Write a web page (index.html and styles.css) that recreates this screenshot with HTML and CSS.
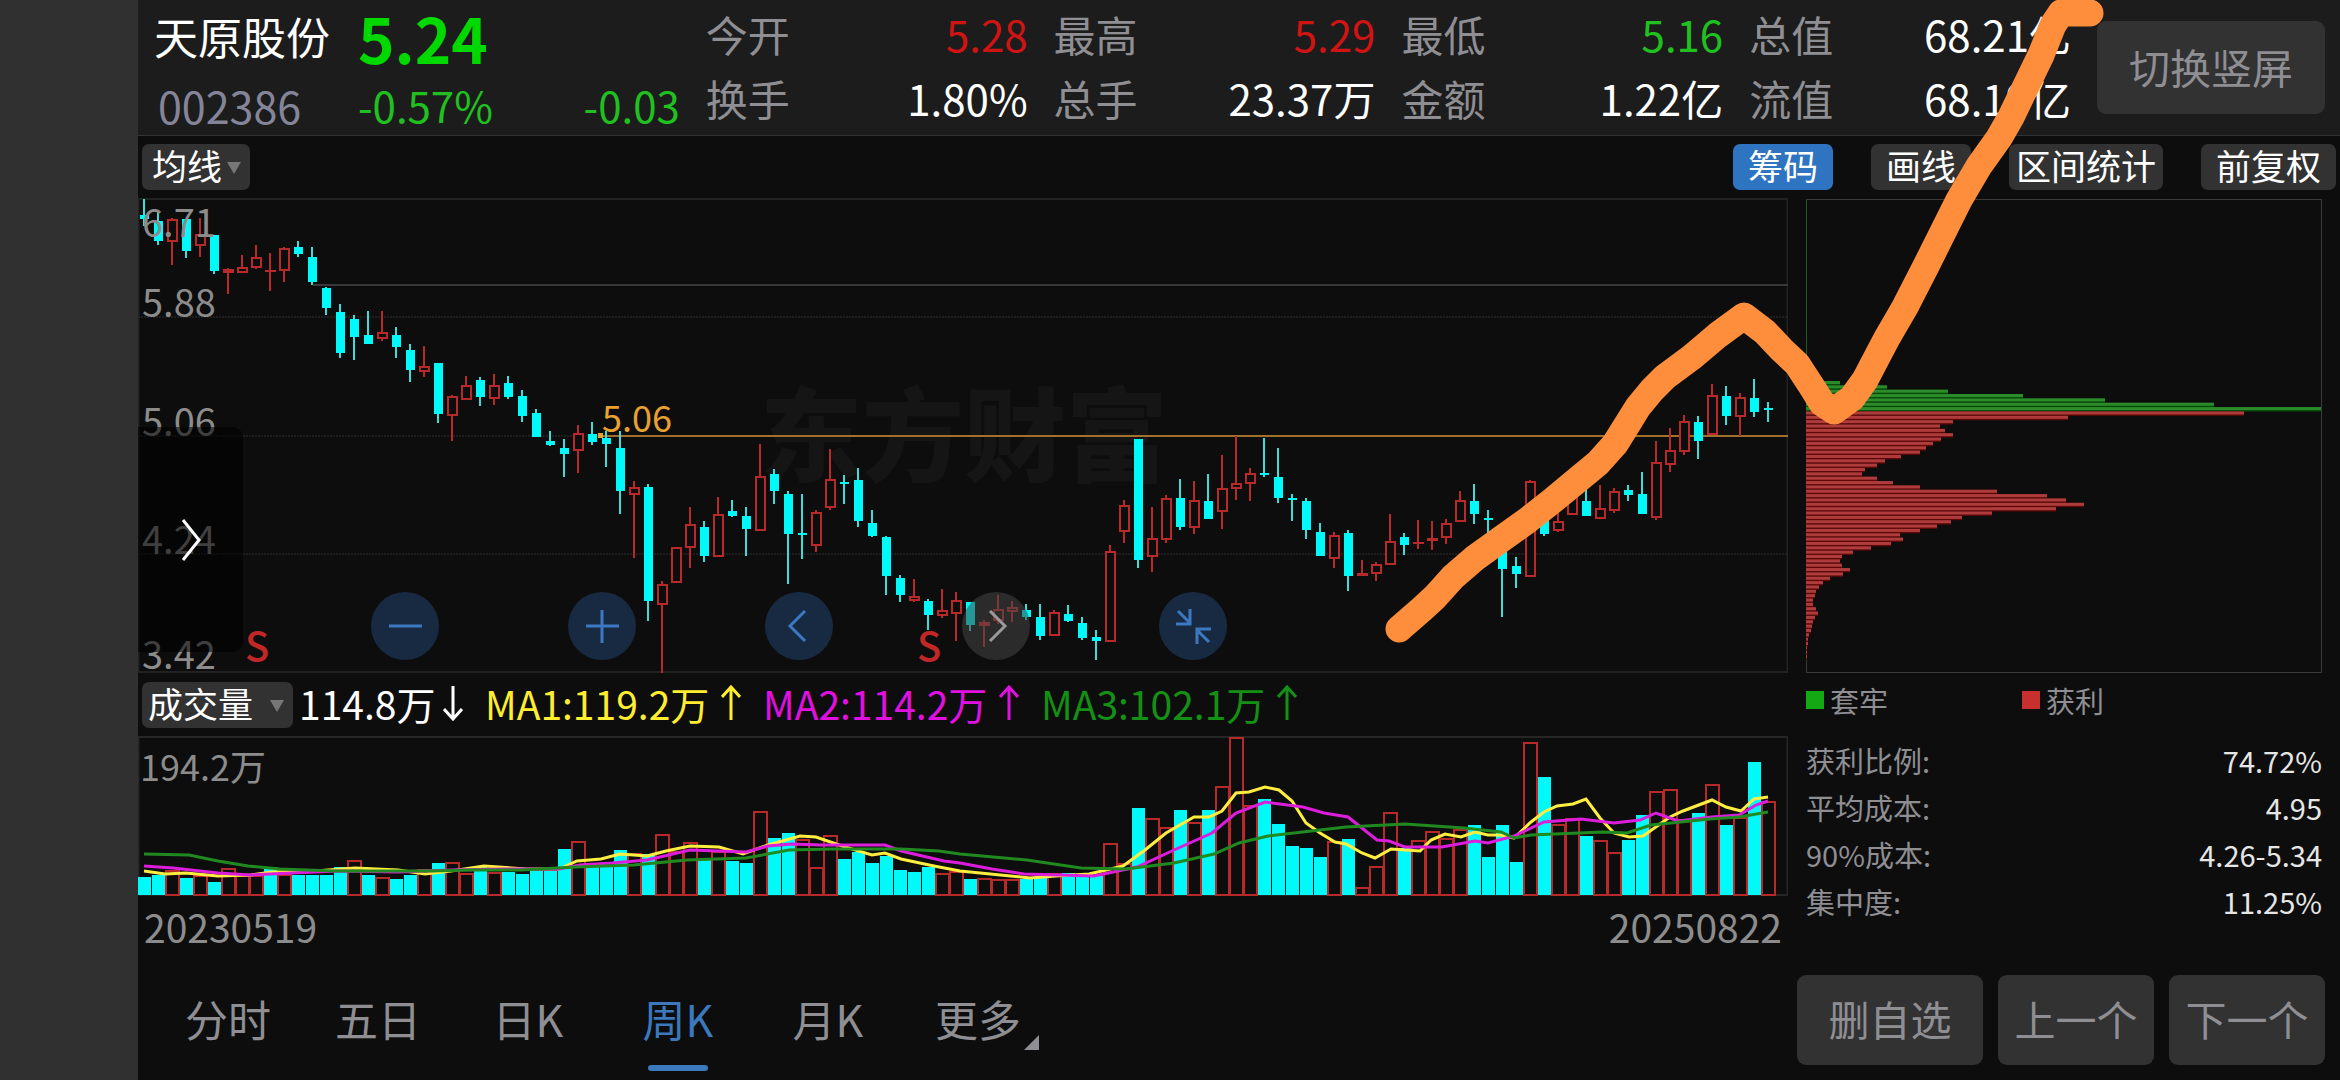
FILE: index.html
```html
<!DOCTYPE html>
<html lang="zh-CN">
<head>
<meta charset="utf-8">
<meta name="viewport" content="width=device-width, initial-scale=1">
<title>天原股份 002386 周K</title>
<link rel="stylesheet" href="styles.css">
</head>
<body>
<div class="app">
  <main class="screen">
    <header class="quote">
      <div class="pair">
        <h1 class="name">天原股份</h1>
        <span class="code">002386</span>
      </div>
      <div class="pair">
        <strong class="price">5.24</strong>
        <div class="change"><span>-0.57%</span><span>-0.03</span></div>
      </div>
      <dl class="stats">
        <div><dt>今开</dt><dd class="up">5.28</dd></div>
        <div><dt>换手</dt><dd>1.80%</dd></div>
      </dl>
      <dl class="stats">
        <div><dt>最高</dt><dd class="up">5.29</dd></div>
        <div><dt>总手</dt><dd>23.37万</dd></div>
      </dl>
      <dl class="stats">
        <div><dt>最低</dt><dd class="down">5.16</dd></div>
        <div><dt>金额</dt><dd>1.22亿</dd></div>
      </dl>
      <dl class="stats">
        <div><dt>总值</dt><dd>68.21亿</dd></div>
        <div><dt>流值</dt><dd>68.19亿</dd></div>
      </dl>
      <button class="block-btn rotate" type="button">切换竖屏</button>
    </header>

    <div class="toolbar">
      <span class="picker">
        <select class="picker-main" aria-label="主图指标"><option>均线</option></select>
      </span>
      <div class="tools">
        <button class="tool active" type="button">筹码</button>
        <button class="tool" type="button">画线</button>
        <button class="tool wide" type="button">区间统计</button>
        <button class="tool" type="button">前复权</button>
      </div>
    </div>

    <div class="board">
      <section class="charts">
        <div class="plot price-plot">
          <span class="watermark">东方财富</span>
          <svg id="candles" viewBox="0 0 1650 475" preserveAspectRatio="none" aria-label="周K线"></svg>
          <span class="axis a1">6.71</span>
          <span class="axis a2">5.88</span>
          <span class="axis a3">5.06</span>
          <span class="axis a4">4.24</span>
          <span class="axis a5">3.42</span>
          <span class="mark-price">5.06</span>
          <span class="sell s1">S</span>
          <span class="sell s2">S</span>
          <button class="drawer" type="button" aria-label="展开">
            <svg width="24" height="48" viewBox="0 0 24 48"><path d="M4 4 L20 24 L4 44" fill="none" stroke="#fff" stroke-width="3"/></svg>
          </button>
          <div class="controls">
            <button type="button" aria-label="缩小"><svg viewBox="0 0 68 68"><path d="M18 34H51"/></svg></button>
            <button type="button" aria-label="放大"><svg viewBox="0 0 68 68"><path d="M18 34H51M34 18V51"/></svg></button>
            <button type="button" aria-label="左移"><svg viewBox="0 0 68 68"><path d="M40 19 L25 34 L40 49"/></svg></button>
            <button type="button" class="off" aria-label="右移"><svg viewBox="0 0 68 68"><path d="M28 19 L43 34 L28 49"/></svg></button>
            <button type="button" aria-label="退出全屏"><svg viewBox="0 0 68 68"><path d="M19 19 L31 31M31 17V32H17M50 50 L38 38M38 52V37H52"/></svg></button>
          </div>
        </div>

        <div class="vol-head">
          <span class="picker">
            <select class="picker-vol" aria-label="副图指标"><option>成交量</option></select>
          </span>
          <span class="ma now">114.8万<svg viewBox="0 0 20 36"><path d="M10 1V34M1 24 L10 34 L19 24"/></svg></span>
          <span class="ma m1">MA1:119.2万<svg viewBox="0 0 20 36"><path d="M10 35V2M1 12 L10 2 L19 12"/></svg></span>
          <span class="ma m2">MA2:114.2万<svg viewBox="0 0 20 36"><path d="M10 35V2M1 12 L10 2 L19 12"/></svg></span>
          <span class="ma m3">MA3:102.1万<svg viewBox="0 0 20 36"><path d="M10 35V2M1 12 L10 2 L19 12"/></svg></span>
        </div>

        <div class="plot vol-plot">
          <svg id="volume" viewBox="0 0 1650 160" preserveAspectRatio="none" aria-label="成交量"></svg>
          <span class="axis vmax">194.2万</span>
        </div>
        <div class="dates"><time datetime="2023-05-19">20230519</time><time datetime="2025-08-22">20250822</time></div>
      </section>

      <section class="chips">
        <svg id="chips" viewBox="0 0 516 475" preserveAspectRatio="none" aria-label="筹码分布"></svg>
        <div class="legend"><span class="trapped">套牢</span><span class="profit">获利</span></div>
        <dl class="facts">
          <div><dt>获利比例:</dt><dd>74.72%</dd></div>
          <div><dt>平均成本:</dt><dd>4.95</dd></div>
          <div><dt>90%成本:</dt><dd>4.26-5.34</dd></div>
          <div><dt>集中度:</dt><dd>11.25%</dd></div>
        </dl>
      </section>
    </div>

    <footer class="bottom">
      <nav class="tabs">
        <a href="#fs">分时</a>
        <a href="#d5">五日</a>
        <a href="#day">日K</a>
        <a href="#week" class="current" aria-current="page">周K</a>
        <a href="#month">月K</a>
        <a href="#more" class="more">更多</a>
      </nav>
      <div class="actions">
        <button class="block-btn remove" type="button">删自选</button>
        <button class="block-btn" type="button">上一个</button>
        <button class="block-btn" type="button">下一个</button>
      </div>
    </footer>
  </main>
  <svg class="sketch" viewBox="0 0 2340 1080" preserveAspectRatio="none" aria-hidden="true">
    <polyline points="1399,629 1422,609 1435,597 1453,577 1475,558 1500,540 1528,520 1552,501 1575,482 1598,463 1615,444 1625,428 1638,407 1652,390 1665,377 1692,357 1718,335 1744,316 1765,332 1782,350 1797,364 1812,387 1822,403 1834,411 1852,398 1865,380 1877,357 1887,338 1905,307 1926,266 1943,232 1959,200 1979,166 1999,138 2011,117 2026,86 2041,55 2053,25 2061,13 2090,13"/>
  </svg>
</div>
<script src="charts.js"></script>
</body>
</html>
```
FILE: styles.css
```css
* { box-sizing: border-box; }

body {
  margin: 0;
  background: #0d0d0d;
  color: #fff;
  font-family: "Noto Sans CJK SC", "Noto Sans", sans-serif;
}

h1, dl, dd { margin: 0; font-weight: 400; }
button, select { font-family: inherit; border: 0; padding: 0; margin: 0; }
svg { display: block; }

.app {
  position: relative;
  display: flex;
  min-height: 100vh;
  padding-left: 138px;
  background: linear-gradient(to right, #303030 138px, #0d0d0d 138px);
}
.screen { flex: 1; min-width: 0; display: flex; flex-direction: column; }

/* quote header */
.quote {
  display: grid;
  grid-template-columns: 178px repeat(5, minmax(0, 1fr)) 228px;
  column-gap: 26px;
  height: 136px;
  padding: 2px 15px 0 16px;
  background: #1c1c1c;
  border-bottom: 1px solid #333;
  font-size: 42px;
}
.pair, .stats { display: flex; flex-direction: column; white-space: nowrap; }
.name { font-size: 44px; line-height: 68px; }
.code { line-height: 70px; padding-left: 4px; color: #85859a; font-size: 43px; }
.price { font-size: 62px; line-height: 70px; font-weight: 700; color: #00d800; }
.change { display: flex; justify-content: space-between; line-height: 66px; color: #20c020; }
.stats > div { display: flex; justify-content: space-between; line-height: 64px; }
.stats dt { color: #8e8e93; }
.up { color: #d01414; }
.down { color: #20c020; }

.block-btn {
  width: 156px;
  height: 90px;
  padding-bottom: 4px;
  border-radius: 9px;
  background: #323232;
  color: #8e8e93;
  font-size: 41px;
}
.block-btn.remove { width: 186px; }
.block-btn.rotate { width: 100%; height: 93px; margin-top: 19px; }

/* indicator toolbar */
.toolbar {
  display: flex;
  justify-content: space-between;
  align-items: center;
  height: 62px;
  padding: 0 4px;
}
.tools { display: flex; gap: 38px; }
.tool {
  height: 46px;
  padding: 0 15px 4px;
  border-radius: 7px;
  background: #323232;
  color: #fff;
  font-size: 35px;
  line-height: 42px;
}
.tool.wide { padding: 0 7px 4px; }
.tool.active { background: #2f74c0; }
.picker { position: relative; display: block; }
.picker::after {
  content: "";
  position: absolute;
  right: 9px;
  top: 18px;
  border: 7px solid transparent;
  border-top: 12px solid #777;
  border-bottom: 0;
}
.picker select {
  display: block;
  appearance: none;
  height: 46px;
  padding-bottom: 4px;
  border-radius: 7px;
  background: #323232;
  color: #fff;
  font-size: 35px;
  line-height: 42px;
}
.picker-main { width: 108px; padding-left: 10px; }
.picker-vol { width: 151px; padding-left: 6px; }

/* chart area */
.board {
  display: grid;
  grid-template-columns: minmax(0, 1fr) 516px;
  column-gap: 18px;
  padding-right: 18px;
}
.plot { position: relative; }
.plot > svg { position: relative; width: 100%; }
.price-plot > svg, .chips > svg { height: 475px; width: 100%; }
.vol-plot > svg { height: 160px; }

.axis { position: absolute; left: 4px; font-size: 38px; line-height: 38px; color: #8c8c8c; }
.a1 { top: 4px; }
.a2 { top: 84px; }
.a3 { top: 203px; }
.a4 { top: 321px; }
.a5 { top: 436px; }
.vmax { top: 10px; left: 2px; font-size: 36px; }
.mark-price { position: absolute; left: 464px; top: 200px; font-size: 36px; line-height: 36px; color: #e8a030; }
.watermark {
  position: absolute;
  left: 622px;
  top: 172px;
  font-size: 102px;
  line-height: 120px;
  font-weight: 900;
  color: #151515;
}
.sell { position: absolute; top: 426px; font-size: 40px; line-height: 40px; font-weight: 500; color: #c02828; }
.s1 { left: 107px; }
.s2 { left: 779px; }

.drawer {
  position: absolute;
  left: 0;
  top: 229px;
  width: 105px;
  height: 225px;
  padding-left: 41px;
  border-radius: 0 10px 10px 0;
  background: rgba(0, 0, 0, 0.55);
}
.controls { position: absolute; left: 233px; top: 394px; display: flex; gap: 129px; }
.controls button { width: 68px; height: 68px; border-radius: 50%; background: rgba(27, 50, 80, 0.8); }
.controls path { fill: none; stroke: #3b78c0; stroke-width: 3; }
.controls .off { background: rgba(70, 70, 70, 0.55); }
.controls .off path { stroke: #999; }

.vol-head { display: flex; align-items: center; height: 63px; padding-left: 4px; white-space: nowrap; }
.ma { display: flex; align-items: center; justify-content: space-between; width: 256px; margin-right: 22px; padding-bottom: 4px; font-size: 39px; line-height: 44px; }
.ma svg { width: 20px; height: 36px; fill: none; stroke: currentColor; stroke-width: 3; }
.ma.now { width: 164px; margin-left: 6px; }
.m1 { color: #ffee30; }
.m2 { color: #e010e0; }
.m3 { color: #149014; }

.dates { display: flex; justify-content: space-between; padding: 7px 6px 0; font-size: 39px; line-height: 46px; color: #8c8c8c; }

/* chip distribution */
.legend { display: flex; height: 64px; font-size: 29px; line-height: 54px; color: #8e8e93; }
.legend span { display: flex; align-items: center; gap: 6px; width: 216px; height: 54px; }
.legend span::before { content: ""; width: 18px; height: 18px; background: #14a814; }
.legend .profit::before { background: #c83030; }
.facts div { display: flex; justify-content: space-between; font-size: 29px; line-height: 47px; }
.facts dt { color: #8e8e93; }
.facts dd { color: #e6e6e6; }

/* bottom bar */
.bottom { display: flex; justify-content: space-between; margin-top: auto; padding: 0 15px; }
.tabs { display: grid; grid-template-columns: repeat(6, 150px); }
.tabs a {
  position: relative;
  height: 105px;
  text-align: center;
  text-decoration: none;
  color: #8e8e93;
  font-size: 43px;
  line-height: 86px;
}
.tabs .current { color: #3b78bc; }
.tabs .current::after {
  content: "";
  position: absolute;
  left: 45px;
  bottom: 9px;
  width: 60px;
  height: 6px;
  border-radius: 3px;
  background: #3b78bc;
}
.tabs .more::after {
  content: "";
  position: absolute;
  right: 14px;
  bottom: 30px;
  border-left: 15px solid transparent;
  border-bottom: 15px solid #8e8e93;
}
.actions { display: flex; gap: 15px; }

/* hand-drawn trend stroke over the whole view */
.sketch { position: absolute; inset: 0; width: 100%; height: 100%; pointer-events: none; }
.sketch polyline { fill: none; stroke: #ff8e3c; stroke-width: 27; stroke-linecap: round; stroke-linejoin: round; }
```
FILE: charts.js
```js
const STEP = 14;
const FIRST = 6;
const CYAN = '#00fafa';
const RED = '#b82a2a';
const BG = '#0d0d0d';

// weekly candles: direction, high, body top, body bottom, low
const candles = `d 1 17 21 28|d 13 23 43 47|u 20 21 44 67|d 21 21 53 60|u 20 36 48 59|d 37 37 73 76|u 70 71 75 96|u 57 69 75 75|u 47 59 70 71|u 55 72 74 93|u 49 50 73 84|d 43 49 56 59
d 49 59 84 87|d 89 90 110 117|d 106 114 155 160|d 117 121 139 162|d 113 137 146 146|u 113 134 141 143|d 129 137 149 160|d 146 152 172 184|u 148 168 174 179|d 165 165 216 225|u 197 198 218 243|u 178 187 202 202
d 179 182 199 208|u 176 187 201 207|d 178 185 199 201|d 192 198 218 224|d 211 215 239 239|d 233 243 247 248|d 241 250 256 279|u 227 235 253 275|d 224 236 244 247|d 233 240 246 269|d 233 250 293 316|u 283 289 297 360
d 286 289 403 423|u 383 386 407 475|u 349 349 385 385|u 309 326 350 370|d 323 329 358 364|u 299 316 359 359|d 302 313 318 319|d 309 318 331 358|u 246 278 333 333|d 271 276 293 306|d 293 296 336 386|d 296 335 337 361
u 312 314 348 354|u 251 281 310 312|d 277 284 286 306|d 270 282 323 329|d 312 325 338 339|d 338 339 378 397|d 377 380 397 404|u 381 398 403 404|d 401 403 417 432|u 391 412 418 420|u 394 402 416 443|d 404 404 427 433
u 422 424 428 449|u 397 411 423 426|u 403 409 414 424|d 406 412 419 422|d 406 419 438 442|u 412 414 438 438|d 407 416 423 424|d 419 425 440 442|d 432 439 443 462|u 347 353 444 444|u 302 307 334 345|d 241 241 362 370
u 309 340 359 374|u 297 300 342 345|d 281 300 329 332|u 283 302 330 336|d 276 303 321 321|u 257 290 314 331|u 238 285 291 302|u 270 275 286 303|d 240 275 277 279|d 250 279 300 305|d 296 300 302 323|d 300 303 332 341
d 325 334 358 358|u 334 337 361 370|d 332 335 378 393|u 362 375 378 378|u 364 366 376 383|u 316 343 367 367|d 335 339 347 357|u 322 344 346 351|u 323 340 343 352|u 321 325 340 346|u 293 302 324 324|d 286 303 316 326
d 312 320 322 339|d 345 350 371 419|d 359 368 376 390|u 282 283 379 379|d 310 318 336 338|u 312 323 333 334|u 285 295 317 317|d 291 303 318 318|u 287 310 321 321|u 290 293 313 315|d 287 292 297 303|d 274 296 316 316
u 243 264 320 322|u 230 252 267 274|u 217 223 254 257|d 218 224 243 261|u 186 197 237 237|d 188 198 218 227|u 195 199 219 238|d 181 200 214 219|d 204 210 212 224`
  .split(/[|\n]/).map(s => { const [k, ...v] = s.trim().split(' '); return [k, ...v.map(Number)]; });

// weekly volume bars
const volumes = `c18 c20 r25 c17 r20 c13 r27 r20 r20 c28 r21 c20 c20 c20 c28 r35 c20 r18 c16 c20 r26 c32 r33 r22 c29 r23 c23 c21 c24 c24
c46 r54 c28 c28 c45 r42 c41 r61 r44 r53 c35 r44 c34 c32 r84 c57 c62 r56 r28 r60 c36 c43 c32 c39 c25 c23 c28 r22 r24 c16
r17 r16 r16 c16 c17 r22 c22 c19 c19 r52 r32 c87 r77 r68 c85 r73 c85 r109 r158 r90 c96 c71 c49 c47 c38 r54 c56 r8 r29 r83
c47 r55 r64 r57 r66 c70 c38 c70 c33 r153 c118 r71 r77 c59 r55 r43 c55 c80 r104 r106 r76 c82 r111 c70 r78 c133 r94`
  .split(/\s+/).map(s => [s[0], Number(s.slice(1))]);

const averages = [
  ['#ffee40', '6,135 27,138 48,137 80,140 113,139 134,136 177,135 217,132 260,134 287,138 313,135 346,130 388,133 421,133 439,125 463,123 482,118 509,120 528,115 552,110 581,111 605,118 630,109 662,100 678,101 704,110 734,119 747,117 763,123 796,130 822,135 892,142 918,140 951,138 985,130 1007,114 1028,97 1056,81 1071,81 1084,75 1098,57 1111,56 1127,51 1141,54 1154,65 1168,87 1182,97 1197,106 1208,108 1224,117 1237,122 1253,113 1282,115 1293,104 1307,98 1323,101 1337,96 1350,99 1363,99 1376,102 1393,86 1406,76 1419,70 1435,68 1448,63 1462,82 1476,97 1491,101 1505,100 1532,81 1545,75 1574,64 1588,71 1603,75 1616,63 1630,61'],
  ['#dc1edc', '6,130 35,132 80,137 113,139 153,137 201,135 260,136 313,134 367,133 421,133 442,129 474,127 509,124 552,114 608,116 630,110 654,108 683,109 747,109 763,115 806,125 822,127 854,133 886,138 956,140 999,131 1036,114 1074,97 1098,77 1127,66 1165,71 1186,77 1210,81 1239,104 1251,105 1267,111 1304,111 1337,105 1350,107 1376,100 1406,86 1443,83 1476,87 1502,84 1518,77 1540,85 1574,81 1601,79 1618,69 1630,65'],
  ['#208a20', '6,118 51,119 80,125 110,130 142,133 196,135 238,135 292,135 335,134 383,134 437,131 496,129 549,124 608,122 651,114 694,113 763,113 801,115 822,118 889,124 943,132 988,133 1036,127 1076,118 1101,107 1130,100 1208,91 1267,88 1326,92 1363,96 1376,102 1393,99 1465,96 1489,97 1513,89 1572,83 1601,81 1630,76']
];

const trapped = [34, 81, 142, 217, 299, 408, 515];
const profit = [438, 262, 147, 134, 139, 147, 135, 127, 120, 114, 95, 79, 71, 59, 56, 71, 87, 114, 191, 241, 260, 278, 250, 186, 156, 145, 131, 114, 94, 97, 85, 65, 47, 36, 34, 36, 44, 37, 24, 17, 13, 10, 9, 7, 7, 10, 12, 9, 7, 6, 5, 3, 2, 2, 1, 1, 1];

const rect = (x, y, w, h, fill, extra = '') => `<rect x="${x}" y="${y}" width="${w}" height="${h}" fill="${fill}" ${extra}/>`;
const line = (x1, y1, x2, y2, color, w, extra = '') => `<line x1="${x1}" y1="${y1}" x2="${x2}" y2="${y2}" stroke="${color}" stroke-width="${w}" ${extra}/>`;
const frame = (w, h, color) => rect(0.5, 1, w - 1, h - 2, 'none', `stroke="${color}" stroke-width="2"`);

function drawCandles() {
  let out = frame(1650, 475, '#222');
  for (const y of [119, 238, 356]) out += line(0, y, 1650, y, '#303030', 1, 'stroke-dasharray="2 1"');
  out += line(175, 87, 1650, 87, '#383838', 2);
  out += line(462, 238, 1650, 238, '#a0702c', 2) + rect(460, 235, 5, 5, '#e8a030');
  candles.forEach(([kind, high, top, bottom, low], i) => {
    const x = FIRST + i * STEP;
    const h = bottom - top;
    if (kind === 'd') {
      out += line(x, high, x, low, '#3cdcd8', 2) + rect(x - 4, top, 9, Math.max(h, 2), CYAN);
    } else {
      out += line(x, high, x, low, RED, 2);
      out += h < 5 ? rect(x - 5, top, 11, Math.max(h, 2), RED)
                   : rect(x - 4, top + 1, 9, h - 2, BG, `stroke="${RED}" stroke-width="2"`);
    }
  });
  document.getElementById('candles').innerHTML = out;
}

function drawVolume() {
  let out = frame(1650, 160, '#262626');
  volumes.forEach(([kind, h], i) => {
    const x = i * STEP;
    out += kind === 'c' ? rect(x, 159 - h, 13, h, CYAN)
                        : rect(x, 160 - h, 13, h - 1, BG, `stroke="${RED}" stroke-width="2"`);
  });
  for (const [color, points] of averages) out += `<polyline points="${points}" fill="none" stroke="${color}" stroke-width="3"/>`;
  document.getElementById('volume').innerHTML = out;
}

function drawChips() {
  let out = rect(0.5, 1.5, 515, 473, 'none', 'stroke="#3a3a3a"') + line(0.5, 1, 0.5, 211, '#1c5c1c', 1);
  [...trapped, ...profit].forEach((w, i) => {
    const green = i < trapped.length;
    const y = 183 + i * 4.35;
    out += rect(0, y, w, 4.35, green ? '#064a06' : '#600808') + rect(0, y, w, 3, green ? '#2c8c2c' : '#ae3c3c');
  });
  document.getElementById('chips').innerHTML = out;
}

drawCandles();
drawVolume();
drawChips();
```
